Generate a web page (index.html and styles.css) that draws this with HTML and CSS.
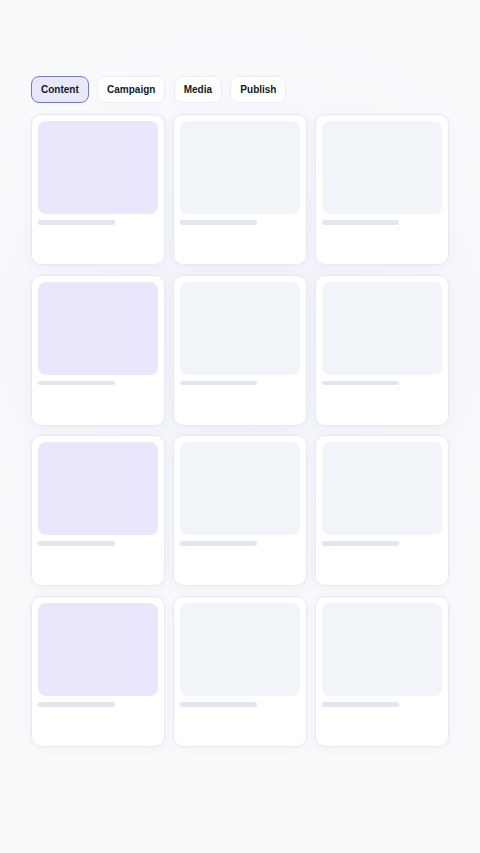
FILE: index.html
```html
<!DOCTYPE html>
<html>
<head>
<meta charset="utf-8">
<link rel="stylesheet" href="styles.css">
</head>
<body>
<div class="page">
  <div class="tabs">
    <button class="tab active">Content</button>
    <button class="tab">Campaign</button>
    <button class="tab">Media</button>
    <button class="tab">Publish</button>
  </div>
  <div class="grid">
    <div class="card"><div class="thumb accent"></div><div class="line"></div></div>
    <div class="card"><div class="thumb"></div><div class="line"></div></div>
    <div class="card"><div class="thumb"></div><div class="line"></div></div>
    <div class="card"><div class="thumb accent"></div><div class="line"></div></div>
    <div class="card"><div class="thumb"></div><div class="line"></div></div>
    <div class="card"><div class="thumb"></div><div class="line"></div></div>
    <div class="card"><div class="thumb accent"></div><div class="line"></div></div>
    <div class="card"><div class="thumb"></div><div class="line"></div></div>
    <div class="card"><div class="thumb"></div><div class="line"></div></div>
    <div class="card"><div class="thumb accent"></div><div class="line"></div></div>
    <div class="card"><div class="thumb"></div><div class="line"></div></div>
    <div class="card"><div class="thumb"></div><div class="line"></div></div>
  </div>
</div>
</body>
</html>
```
FILE: styles.css
```css
html, body {
  margin: 0;
  padding: 0;
}
body {
  width: 480px;
  height: 853px;
  background: #f8fafc;
  font-family: "Liberation Sans", Arial, sans-serif;
  overflow: hidden;
}
.page {
  padding: 76px 31px 0 31px;
  background: radial-gradient(ellipse 320px 300px at 240px 330px, #f1f3fa 0%, rgba(248,250,252,0) 100%);
  height: 853px;
  box-sizing: border-box;
}
.tabs {
  display: flex;
  gap: 8.3px;
  margin-bottom: 11px;
}
.tab {
  height: 27px;
  padding: 0 9px;
  border: 1px solid #eceef3;
  border-radius: 8px;
  background: #ffffff;
  font-family: "Liberation Sans", Arial, sans-serif;
  font-weight: 700;
  font-size: 10px;
  color: #111827;
  box-sizing: border-box;
}
.tab.active {
  background: #e9e8fb;
  border-color: #7b75c7;
}
.grid {
  display: grid;
  grid-template-columns: repeat(3, 134px);
  grid-auto-rows: 151px;
  column-gap: 8px;
  row-gap: 9.7px;
}
.card {
  background: #ffffff;
  border: 1px solid #e6e9f1;
  border-radius: 10px;
  box-shadow: 0 2px 10px rgba(100, 110, 170, 0.07);
  padding: 6px;
  box-sizing: border-box;
  display: flex;
  flex-direction: column;
}
.thumb {
  height: 93px;
  border-radius: 8px;
  background: #f1f4f8;
}
.thumb.accent {
  background: #e8e7fc;
}
.line {
  margin-top: 6px;
  width: 77px;
  height: 4.5px;
  border-radius: 2px;
  background: #e2e6ee;
}
```
